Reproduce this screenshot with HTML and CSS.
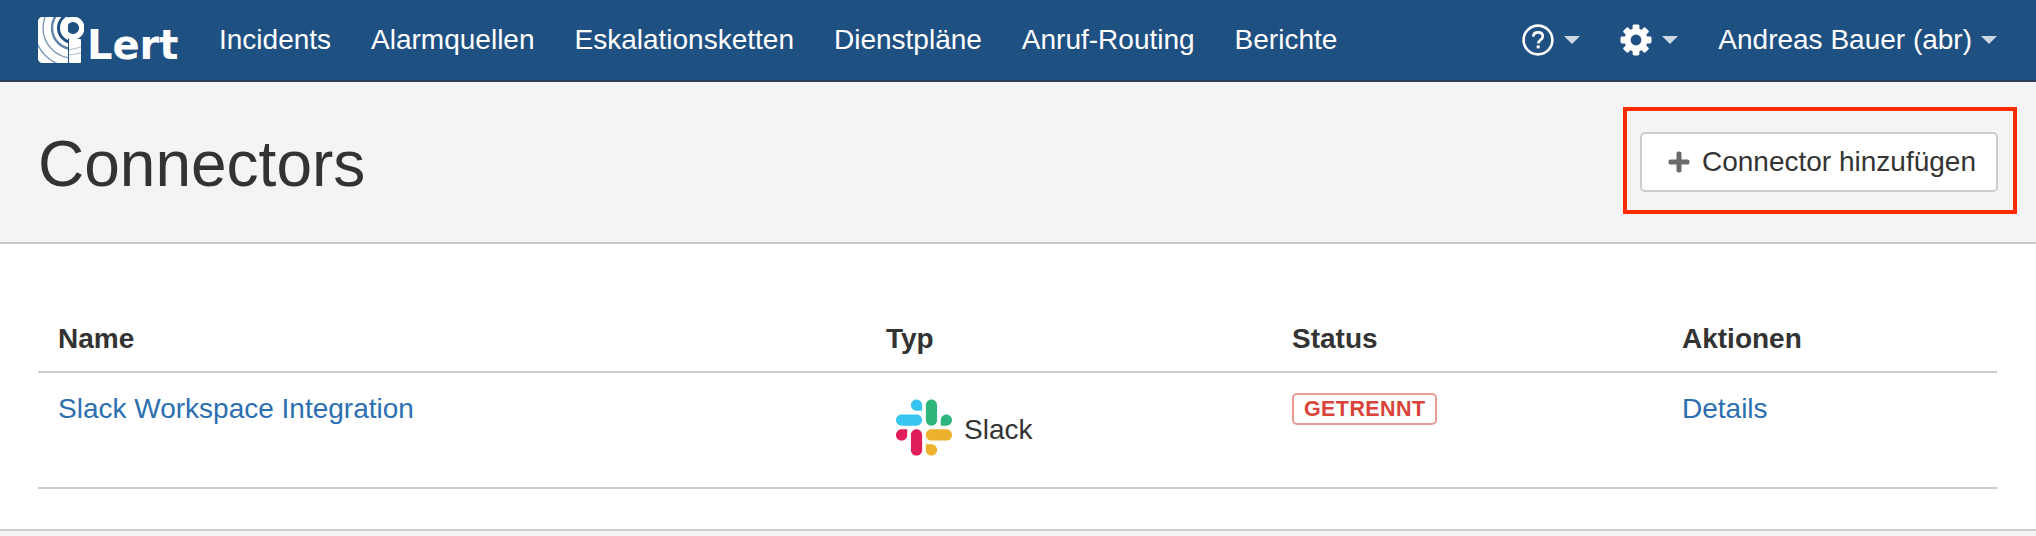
FILE: index.html
```html
<!DOCTYPE html>
<html lang="de">
<head>
<meta charset="utf-8">
<title>Connectors</title>
<link rel="stylesheet" href="styles.css">
</head>
<body>
<nav class="navbar">
  <a class="brand" href="#">
    <svg class="brand-mark" viewBox="0 0 46 46" width="46" height="46" aria-hidden="true">
      <defs>
        <clipPath id="body-clip">
          <path d="M4 0H30V46H4C2 46 0 44 0 42V4C0 2 2 0 4 0Z"/>
        </clipPath>
      </defs>
      <path d="M4 0H30V46H4C2 46 0 44 0 42V4C0 2 2 0 4 0Z" fill="#fff"/>
      <g clip-path="url(#body-clip)" fill="none" stroke="#7d9abb">
        <circle cx="35" cy="11" r="14.5" stroke="#1f5082" stroke-width="3"/>
        <circle cx="35" cy="11" r="21" stroke="#5e82a8" stroke-width="2.4"/>
        <circle cx="35" cy="11" r="30" stroke-width="1.4"/>
        <circle cx="35" cy="11" r="39" stroke-width="1.4"/>
      </g>
      <rect x="31" y="22" width="12" height="24" rx="1" fill="#fff"/>
      <circle cx="35" cy="11" r="8.8" fill="none" stroke="#fff" stroke-width="5.4"/>
      <path d="M31 33L43 30M31 38L43 36" stroke="#a9bdd2" stroke-width="1" fill="none"/>
    </svg>
    <span class="brand-text">Lert</span>
  </a>
  <ul class="nav-main">
    <li><a href="#">Incidents</a></li>
    <li><a href="#">Alarmquellen</a></li>
    <li><a href="#">Eskalationsketten</a></li>
    <li><a href="#">Dienstpläne</a></li>
    <li><a href="#">Anruf-Routing</a></li>
    <li><a href="#">Berichte</a></li>
  </ul>
  <ul class="nav-right">
    <li class="dropdown">
      <svg class="icon-help" viewBox="0 0 32 32" width="32" height="32" aria-hidden="true">
        <circle cx="16" cy="16" r="14.4" fill="none" stroke="#fff" stroke-width="2.6"/>
        <path d="M11.2 12.6C11.4 9.8 13.4 8.4 16 8.4C18.8 8.4 20.8 10 20.8 12.5C20.8 15.8 16.2 16 16.2 19.6" fill="none" stroke="#fff" stroke-width="2.6"/>
        <rect x="14.7" y="21.4" width="3" height="3" fill="#fff"/>
      </svg>
      <span class="caret"></span>
    </li>
    <li class="dropdown">
      <svg class="icon-gear" viewBox="0 0 32 32" width="32" height="32" aria-hidden="true">
        <g fill="#fff">
          <rect x="12.6" y="0.5" width="6.8" height="31" rx="1.4"/>
          <rect x="12.6" y="0.5" width="6.8" height="31" rx="1.4" transform="rotate(45 16 16)"/>
          <rect x="12.6" y="0.5" width="6.8" height="31" rx="1.4" transform="rotate(90 16 16)"/>
          <rect x="12.6" y="0.5" width="6.8" height="31" rx="1.4" transform="rotate(135 16 16)"/>
        </g>
        <circle cx="16" cy="16" r="8.5" fill="none" stroke="#fff" stroke-width="6"/>
        <circle cx="16" cy="16" r="5.4" fill="#1f5082"/>
      </svg>
      <span class="caret"></span>
    </li>
    <li class="dropdown user">Andreas Bauer (abr)<span class="caret"></span></li>
  </ul>
</nav>

<header class="page-header">
  <h1>Connectors</h1>
  <div class="action-highlight">
    <button class="btn" type="button">
      <svg class="icon-plus" viewBox="0 0 22 22" width="22" height="22" aria-hidden="true">
        <path d="M8.5 2.5C8.5 1.3 9.4.5 10.6.5H11.4C12.6.5 13.5 1.3 13.5 2.5V8.5H19.5C20.7 8.5 21.5 9.4 21.5 10.6V11.4C21.5 12.6 20.7 13.5 19.5 13.5H13.5V19.5C13.5 20.7 12.6 21.5 11.4 21.5H10.6C9.4 21.5 8.5 20.7 8.5 19.5V13.5H2.5C1.3 13.5.5 12.6.5 11.4V10.6C.5 9.4 1.3 8.5 2.5 8.5H8.5Z" fill="#6a6a6a"/>
      </svg>
      <span class="btn-label">Connector hinzufügen</span>
    </button>
  </div>
</header>

<main class="content">
  <table class="table">
    <thead>
      <tr>
        <th class="col-name">Name</th>
        <th class="col-type">Typ</th>
        <th class="col-status">Status</th>
        <th class="col-actions">Aktionen</th>
      </tr>
    </thead>
    <tbody>
      <tr>
        <td><a href="#">Slack Workspace Integration</a></td>
        <td>
          <span class="type-cell">
            <svg class="slack-logo" viewBox="0 0 2447.6 2452.5" width="56" height="57" aria-hidden="true">
              <path fill="#36c5f0" d="M897.4 0C762.1.1 652.6 109.9 652.7 245.2c-.1 135.3 109.5 245.1 244.8 245.2h244.8V245.3C1142.4 110 1032.8.2 897.4 0c.1 0 .1 0 0 0m0 654H244.8C109.5 654.1-.1 763.9 0 899.2c-.2 135.3 109.4 245.1 244.7 245.3h652.7c135.3-.1 244.9-109.9 244.8-245.2.1-135.4-109.5-245.2-244.8-245.3z"/>
              <path fill="#2eb67d" d="M2447.6 899.2c.1-135.3-109.5-245.1-244.8-245.2-135.3.1-244.9 109.9-244.8 245.2v245.3h244.8c135.3-.1 244.9-109.9 244.8-245.3zm-652.7 0V245.2C1795 110 1685.5.2 1550.2 0c-135.3.1-244.9 109.9-244.8 245.2v654c-.2 135.3 109.4 245.1 244.7 245.3 135.3-.1 244.9-109.9 244.8-245.3z"/>
              <path fill="#ecb22e" d="M1550.1 2452.5c135.3-.1 244.9-109.9 244.8-245.2.1-135.3-109.5-245.1-244.8-245.2h-244.8v245.2c-.1 135.2 109.5 245 244.8 245.2zm0-654.1h652.7c135.3-.1 244.9-109.9 244.8-245.2.2-135.3-109.4-245.1-244.7-245.3h-652.7c-135.3.1-244.9 109.9-244.8 245.2-.1 135.4 109.4 245.2 244.7 245.3z"/>
              <path fill="#e01e5a" d="M0 1553.2c-.1 135.3 109.5 245.1 244.8 245.2 135.3-.1 244.9-109.9 244.8-245.2V1308H244.8C109.5 1308.1-.1 1417.9 0 1553.2zm652.7 0v654c-.2 135.3 109.4 245.1 244.7 245.3 135.3-.1 244.9-109.9 244.8-245.2v-653.9c.2-135.3-109.4-245.1-244.7-245.3-135.4 0-244.9 109.8-244.8 245.1 0 0 0 .1 0 0z"/>
            </svg>
            <span class="type-name">Slack</span>
          </span>
        </td>
        <td><span class="label-danger">GETRENNT</span></td>
        <td><a href="#">Details</a></td>
      </tr>
    </tbody>
  </table>
</main>
<div class="page-footer"></div>
</body>
</html>
```

FILE: styles.css
```css
* { box-sizing: border-box; }

html, body {
  margin: 0;
  padding: 0;
  height: 536px;
  overflow: hidden;
  background: #fff;
  font-family: "Liberation Sans", Arial, sans-serif;
  font-size: 28px;
  color: #333;
}

a { color: #2c6fb0; text-decoration: none; }

.navbar {
  display: flex;
  align-items: center;
  height: 82px;
  padding: 0 39px 0 38px;
  background: #1f5082;
  border-bottom: 2px solid #2e4057;
  color: #fff;
}

.brand {
  display: flex;
  align-items: flex-end;
  gap: 3px;
  width: 181px;
  height: 46px;
  margin-top: -1px;
  color: #fff;
}

.brand-mark { flex: none; }

.brand-text {
  font-family: "DejaVu Sans", sans-serif;
  font-size: 40px;
  line-height: 36px;
  font-weight: 700;
  white-space: nowrap;
}

.nav-main, .nav-right {
  display: flex;
  align-items: center;
  list-style: none;
  margin: 0;
  padding: 0;
}

.nav-main { gap: 40px; }
.nav-main a { color: #fff; }

.nav-right { margin-left: auto; gap: 40px; }

.dropdown {
  display: flex;
  align-items: center;
  gap: 10px;
}

.caret {
  width: 0;
  height: 0;
  border-left: 8px solid transparent;
  border-right: 8px solid transparent;
  border-top: 8px solid #cdd7e3;
}

.user { gap: 9px; }

.page-header {
  display: flex;
  align-items: center;
  justify-content: space-between;
  height: 162px;
  padding: 0 19px 4px 38px;
  background: #f4f4f4;
  border-bottom: 2px solid #ccc;
}

.page-header h1 {
  margin: 8px 0 0;
  font-size: 64px;
  font-weight: 400;
  line-height: 1;
  color: #333;
}

.action-highlight {
  display: flex;
  border: 4.5px solid #ff2a00;
  padding: 21px 15px 18px 13px;
}

.btn {
  display: flex;
  align-items: center;
  gap: 12px;
  width: 358px;
  height: 60px;
  padding: 0 20px 0 26px;
  background: #fff;
  border: 2px solid #ccc;
  border-radius: 5px;
  font: inherit;
  font-size: 28px;
  color: #333;
  white-space: nowrap;
}

.btn-label { margin-top: 1px; }

.icon-plus { flex: none; }

.content { padding: 70px 39px 0 38px; }

.table {
  width: 1959px;
  border-collapse: collapse;
  table-layout: fixed;
}

.col-name { width: 828px; }
.col-type { width: 406px; }
.col-status { width: 390px; }

.table th {
  height: 58px;
  padding: 0 20px 7px;
  text-align: left;
  font-weight: 700;
  line-height: 38px;
  border-bottom: 2px solid #ccc;
}

.table td {
  height: 116px;
  padding: 17px 20px 0;
  vertical-align: top;
  line-height: 38px;
  border-bottom: 2px solid #ccc;
}

.type-cell {
  display: flex;
  align-items: center;
  gap: 12px;
  margin-left: 10px;
  margin-top: 9px;
}

.type-name { margin-top: 4px; }

.slack-logo { flex: none; }

.label-danger {
  display: inline-block;
  height: 32px;
  padding: 0 10px;
  border: 2px solid #ec9a94;
  border-radius: 5px;
  font-size: 21.5px;
  font-weight: 700;
  line-height: 28px;
  letter-spacing: .4px;
  color: #d9433a;
  vertical-align: top;
  margin-top: 3px;
}

.page-footer {
  margin-top: 40px;
  height: 20px;
  background: #f4f4f4;
  border-top: 2px solid #ccc;
}
```
